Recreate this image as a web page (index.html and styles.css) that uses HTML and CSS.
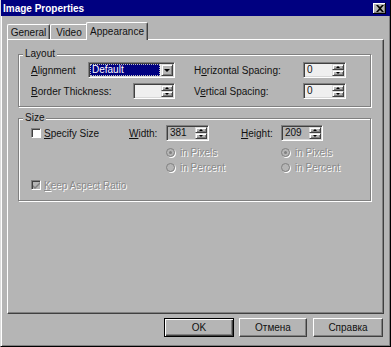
FILE: index.html
```html
<!DOCTYPE html>
<html>
<head>
<meta charset="utf-8">
<link rel="stylesheet" href="styles.css">
</head>
<body>
<div class="dialog">
  <div class="titlebar">
    <span class="title">Image Properties</span>
    <span class="close"><svg width="8" height="7" viewBox="0 0 8 7"><path d="M0 0h2l2 2 2-2h2L5 3.5 8 7H6L4 5 2 7H0l3-3.5z" fill="#000"/></svg></span>
  </div>
  <div class="content">
    <div class="tabs">
      <div class="tab tab-general">General</div>
      <div class="tab tab-video">Video</div>
      <div class="tab active">Appearance</div>
    </div>
    <div class="panel">
      <div class="group layout">
        <span class="legend">Layout</span>
        <div class="row">
          <div class="cell left"><span><u>A</u>lignment</span>
            <div class="combo field"><span class="sel">Default</span><span class="drop"><i class="arr-dn"></i></span></div>
          </div>
          <div class="cell right"><span>H<u>o</u>rizontal Spacing:</span>
            <div class="spin field w43"><span class="val">0</span><span class="btns"><span class="sbtn"><i class="arr-up"></i></span><span class="sbtn"><i class="arr-dn"></i></span></span></div>
          </div>
        </div>
        <div class="row">
          <div class="cell left"><span><u>B</u>order Thickness:</span>
            <div class="spin field w42"><span class="val"></span><span class="btns"><span class="sbtn"><i class="arr-up"></i></span><span class="sbtn"><i class="arr-dn"></i></span></span></div>
          </div>
          <div class="cell right"><span>V<u>e</u>rtical Spacing:</span>
            <div class="spin field w43"><span class="val">0</span><span class="btns"><span class="sbtn"><i class="arr-up"></i></span><span class="sbtn"><i class="arr-dn"></i></span></span></div>
          </div>
        </div>
      </div>
      <div class="group size">
        <span class="legend">Size</span>
        <div class="sizegrid">
          <div class="opt c1"><span class="chk"></span><span><u>S</u>pecify Size</span></div>
          <div class="lbl c2"><u>W</u>idth:</div>
          <div class="spin field gray w43 c3"><span class="val">381</span><span class="btns"><span class="sbtn"><i class="arr-up"></i></span><span class="sbtn"><i class="arr-dn"></i></span></span></div>
          <div class="lbl c4"><u>H</u>eight:</div>
          <div class="spin field gray w42 c5"><span class="val">209</span><span class="btns"><span class="sbtn"><i class="arr-up"></i></span><span class="sbtn"><i class="arr-dn"></i></span></span></div>

          <div class="opt dis r2 c3"><span class="radio on"></span><span>in Pixels</span></div>
          <div class="opt dis r2 c5"><span class="radio on"></span><span>in Pixels</span></div>
          <div class="opt dis r3 c3"><span class="radio"></span><span>in Percent</span></div>
          <div class="opt dis r3 c5"><span class="radio"></span><span>in Percent</span></div>

          <div class="opt dis r4 keep"><span class="chk chk-dis"><svg width="7" height="7" viewBox="0 0 7 7"><path d="M0 3l2 2 5-5v2L2 7 0 5z" fill="#808080"/></svg></span><span><u>K</u>eep Aspect Ratio</span></div>
        </div>
      </div>
    </div>
    <div class="buttons">
      <div class="btn default b-ok">OK</div>
      <div class="btn b-cancel">Отмена</div>
      <div class="btn b-help">Справка</div>
    </div>
  </div>
</div>
</body>
</html>
```
FILE: styles.css
```css
* { box-sizing: border-box; }
html, body { margin: 0; padding: 0; }
body {
  background: #b5b5b5;
  font-family: "Liberation Sans", Arial, sans-serif;
  font-size: 10px;
  color: #111;
}
u { text-decoration: underline; text-underline-offset: 1px; }

.dialog {
  width: 391px;
  height: 347px;
  display: flex;
  flex-direction: column;
  background: #b5b5b5;
  border-left: 1px solid #dcdcdc;
  border-right: 1px solid #000;
  border-bottom: 1px solid #000;
  box-shadow: inset 1px 0 #fff, inset -1px -1px #808080;
}

.titlebar {
  height: 16px;
  flex: none;
  background: #000080;
  color: #fff;
  display: flex;
  align-items: center;
  justify-content: space-between;
  padding: 0 4px 0 2px;
}
.title { font-weight: bold; font-size: 10px; }
.close {
  width: 13px;
  height: 11px;
  background: #b5b5b5;
  box-shadow: inset -1px -1px #000, inset 1px 1px #fff, inset -2px -2px #808080;
  display: flex;
  align-items: center;
  justify-content: center;
}

.content {
  flex: 1;
  display: flex;
  flex-direction: column;
  padding: 4px 6px 0 6px;
}

.tabs {
  height: 19px;
  display: flex;
  align-items: flex-end;
}
.tab {
  height: 15px;
  border-top: 1px solid #fff;
  border-left: 1px solid #fff;
  border-right: 1px solid #404040;
  border-radius: 2px 2px 0 0;
  box-shadow: inset -1px 0 #808080;
  display: flex;
  align-items: center;
  justify-content: center;
  background: #b5b5b5;
}
.tab-general { width: 43px; }
.tab-video { width: 38px; }
.tab.active {
  width: 62px;
  height: 18px;
  margin-left: -2px;
  margin-bottom: -1px;
  position: relative;
  z-index: 1;
}

.panel {
  width: 377px;
  height: 275px;
  border-top: 1px solid #fff;
  border-left: 1px solid #fff;
  border-right: 1px solid #404040;
  border-bottom: 1px solid #404040;
  box-shadow: inset -1px -1px #808080;
  padding: 14px 0 0 10px;
}

.group {
  position: relative;
  width: 353px;
  border: 1px solid #808080;
  box-shadow: 1px 1px 0 #fff, inset 1px 1px 0 #fff;
}
.legend {
  position: absolute;
  top: -7px;
  left: 4px;
  padding: 0 2px;
  line-height: 12px;
  background: #b5b5b5;
}
.layout { padding: 7px 0 7px 12px; }
.size { margin-top: 11px; padding: 6px 0 8px 12px; }

.row { display: flex; gap: 19px; height: 16px; }
.row + .row { margin-top: 5px; }
.cell { display: flex; align-items: center; }
.cell.left { width: 144px; }
.cell.right { width: 152px; }
.cell > .field { margin-left: auto; }

.field {
  height: 16px;
  background: #efefef;
  border-top: 1px solid #808080;
  border-left: 1px solid #808080;
  border-right: 1px solid #fff;
  border-bottom: 1px solid #fff;
  box-shadow: inset 1px 1px #404040, inset -1px -1px #d8d8d8;
  display: flex;
  padding: 1px;
}
.field.gray { background: #b5b5b5; }
.w42 { width: 42px; }
.w43 { width: 43px; }

.val { flex: 1; line-height: 12px; padding-left: 2px; }
.btns { width: 12px; display: flex; flex-direction: column; }
.sbtn, .drop {
  background: #b5b5b5;
  border-top: 1px solid #dcdcdc;
  border-left: 1px solid #dcdcdc;
  border-right: 1px solid #404040;
  border-bottom: 1px solid #404040;
  box-shadow: inset 1px 1px #fff, inset -1px -1px #808080;
  display: flex;
  align-items: center;
  justify-content: center;
}
.sbtn { flex: 1; }
.arr-up, .arr-dn { display: block; width: 0; height: 0; border-left: 2px solid transparent; border-right: 2px solid transparent; }
.arr-up { border-bottom: 2px solid #000; }
.arr-dn { border-top: 2px solid #000; }
.drop .arr-dn { border-left-width: 3px; border-right-width: 3px; border-top-width: 3px; }

.combo { width: 87px; }
.sel {
  flex: 1;
  margin: 0 1px 0 0;
  background: #000080;
  color: #fff;
  outline: 1px dotted #c0c0c0;
  outline-offset: -1px;
  line-height: 12px;
  padding-left: 2px;
}
.drop { width: 12px; }

.sizegrid {
  display: grid;
  grid-template-columns: 98px 37px 75px 40px 1fr;
  grid-template-rows: 16px 18px 15px 18px;
}
.c1 { grid-column: 1; }
.c2 { grid-column: 2; }
.c3 { grid-column: 3; }
.c4 { grid-column: 4; }
.c5 { grid-column: 5; }
.r2 { grid-row: 2; }
.r3 { grid-row: 3; }
.r4 { grid-row: 4; }
.keep { grid-column: 1 / span 3; }
.lbl { display: flex; align-items: center; }
.opt { display: flex; align-items: center; gap: 3px; }
.r2, .r3, .r4 { align-self: end; height: 14px; }
.dis { color: #8a8a8a; text-shadow: 1px 1px 0 #fff; }

.chk {
  width: 10px;
  height: 10px;
  background: #fff;
  border-top: 1px solid #808080;
  border-left: 1px solid #808080;
  border-right: 1px solid #fff;
  border-bottom: 1px solid #fff;
  box-shadow: inset 1px 1px #404040;
  display: flex;
  align-items: center;
  justify-content: center;
  flex: none;
}
.chk-dis { background: #b5b5b5; }
.radio {
  width: 9px;
  height: 9px;
  border-radius: 50%;
  border: 1px solid #808080;
  box-shadow: 1px 1px 0 #fff;
  flex: none;
  display: flex;
  align-items: center;
  justify-content: center;
  margin-right: 2px;
}
.radio.on::after {
  content: "";
  width: 3px;
  height: 3px;
  border-radius: 50%;
  background: #808080;
}

.buttons {
  display: flex;
  justify-content: flex-end;
  margin-top: 4px;
  padding-right: 1px;
}
.btn {
  height: 19px;
  display: flex;
  align-items: center;
  justify-content: center;
  background: #b5b5b5;
  border-top: 1px solid #fff;
  border-left: 1px solid #fff;
  border-right: 1px solid #404040;
  border-bottom: 1px solid #404040;
  box-shadow: inset -1px -1px #808080;
}
.btn.default {
  border: 1px solid #000;
  box-shadow: inset 1px 1px #fff, inset -1px -1px #404040, inset -2px -2px #808080;
}
.b-ok { width: 70px; }
.b-cancel { width: 68px; margin-left: 5px; }
.b-help { width: 70px; margin-left: 6px; }
```
